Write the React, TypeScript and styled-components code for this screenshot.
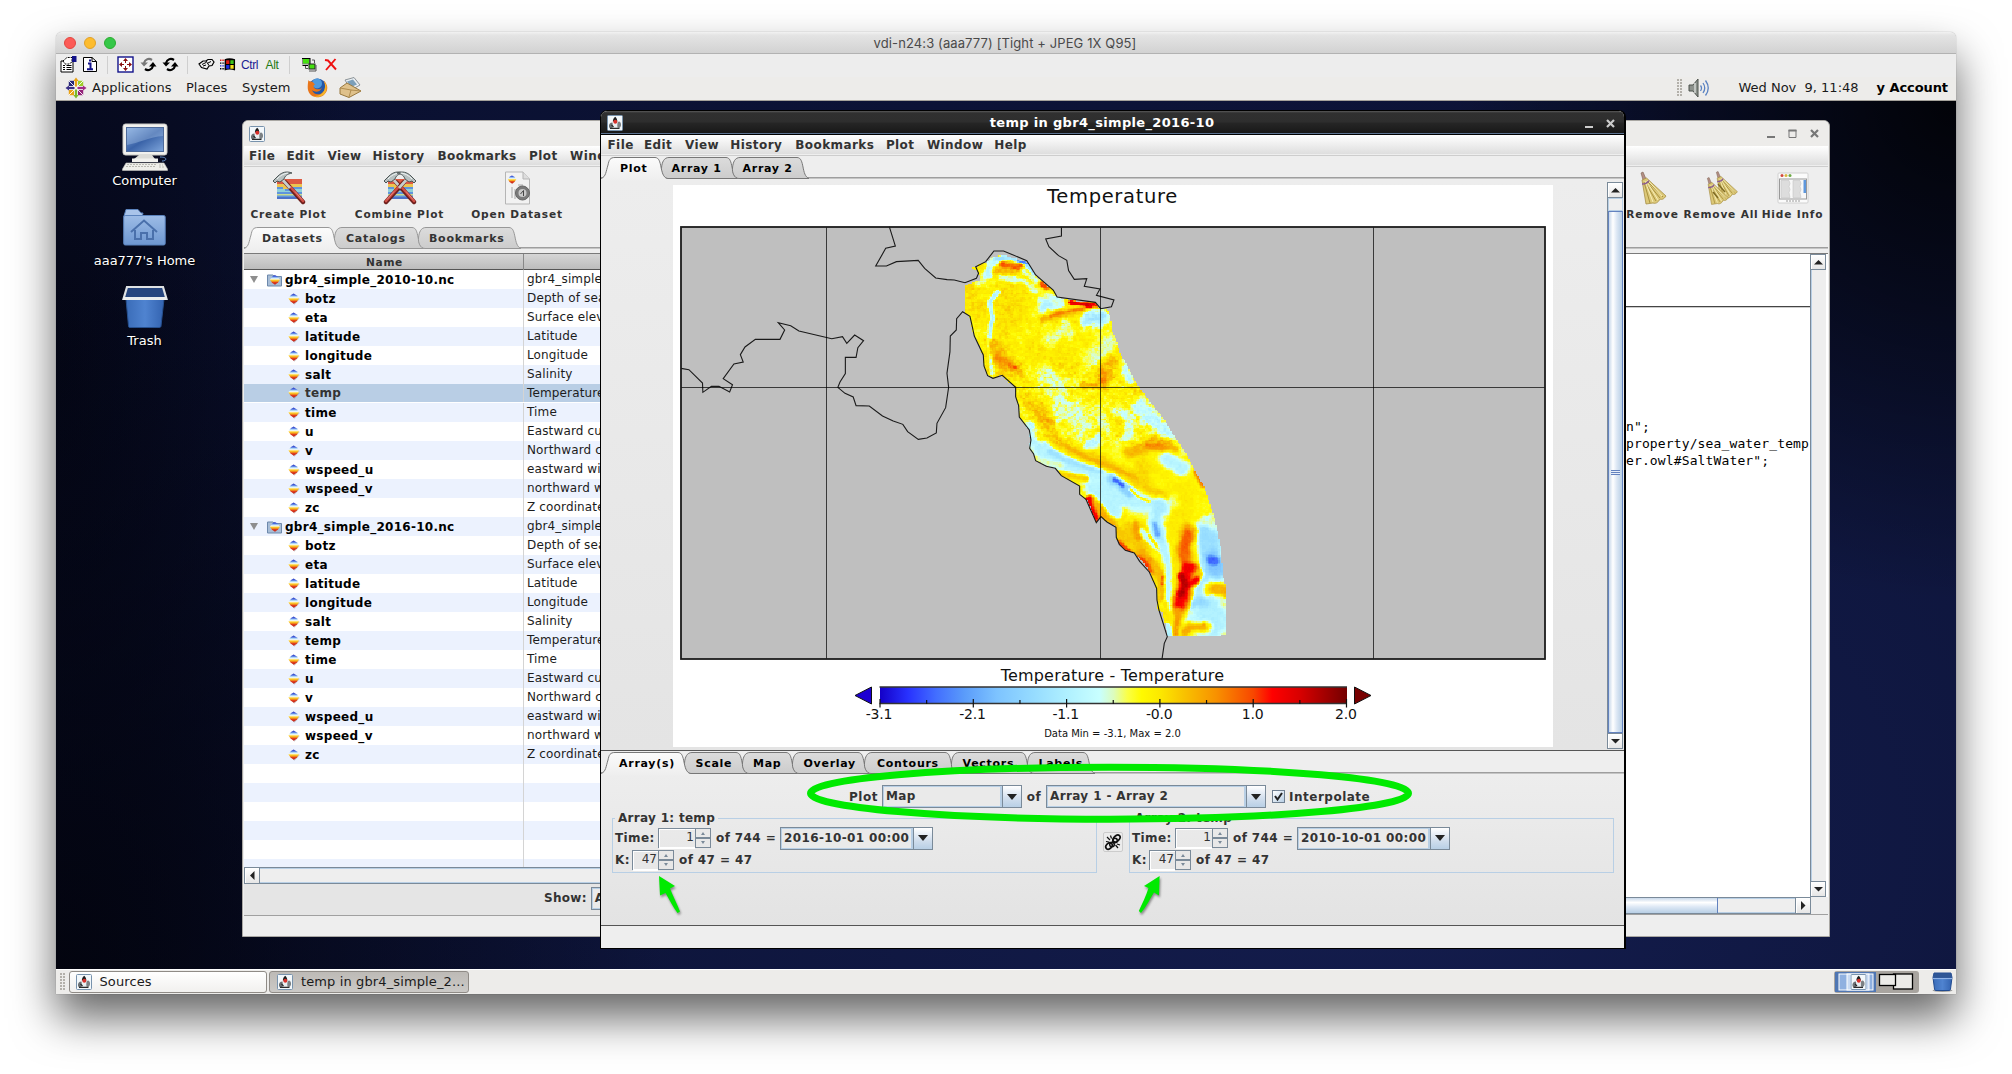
import React from "react";
import styled, { createGlobalStyle, css } from "styled-components";

const Global = createGlobalStyle`
  html, body { margin: 0; padding: 0; background: #fff; }
  body { width: 2012px; height: 1074px; overflow: hidden; font-family: "DejaVu Sans", sans-serif; }
  * { box-sizing: border-box; }
  svg { display: block; }
`;

/* ---------- shell ---------- */
const Page = styled.div`
  height: 1074px;
  padding: 32px 56px 0 56px;
  overflow: hidden;
`;
const MacWindow = styled.div`
  width: 1900px;
  height: 962px;
  display: flex;
  flex-direction: column;
  border-radius: 6px 6px 0 0;
  box-shadow: 0 0 1px rgba(0, 0, 0, 0.5), 0 24px 44px rgba(0, 0, 0, 0.6);
  background: #ededed;
  overflow: clip;
`;
const MacTitle = styled.div`
  height: 22px;
  flex: none;
  display: grid;
  grid-template-columns: 74px 1fr 84px;
  align-items: center;
  padding-left: 8px;
  background: linear-gradient(#f2f2f2, #e4e4e4 15%, #d2d2d2);
  border-bottom: 1px solid #b2b2b2;
  font: 13px/20px Inter, sans-serif;
  letter-spacing: 0.11px;
  color: #4a4a4a;
  text-align: center;
`;
const Lights = styled.div`
  display: flex;
  gap: 8px;
`;
const Light = styled.i<{ $c: string; $b: string }>`
  width: 12px;
  height: 12px;
  border-radius: 50%;
  background: ${(p) => p.$c};
  border: 1px solid ${(p) => p.$b};
`;
const VncBar = styled.div`
  height: 23px;
  flex: none;
  display: flex;
  align-items: center;
  padding: 0 0 2px 3px;
  background: #ededed;
`;
const VncItem = styled.div<{ $w: number }>`
  width: ${(p) => p.$w}px;
  display: flex;
  justify-content: center;
`;
const VncSep = styled.i<{ $m: number }>`
  width: 1px;
  height: 18px;
  background: #cfcfcf;
  margin: 0 ${(p) => p.$m}px;
`;
const Key = styled.span<{ $c: string }>`
  font: 12px/16px "Liberation Sans", sans-serif;
  letter-spacing: -0.4px;
  color: ${(p) => p.$c};
`;
const Panel = styled.div`
  height: 24px;
  flex: none;
  display: flex;
  justify-content: space-between;
  align-items: center;
  padding: 0 8px 2px 9px;
  background: #edecea;
  border-bottom: 1px solid #a5a29b;
  font-size: 13px;
  color: #1a1a1a;
  white-space: pre;
`;
const PanelSide = styled.div`
  display: flex;
  align-items: center;
`;
const PanelItem = styled.span<{ $l: number; $w?: number; $bold?: boolean; $ls?: number }>`
  margin-left: ${(p) => p.$l}px;
  ${(p) => p.$w && css`width: ${p.$w}px;`}
  font-weight: ${(p) => (p.$bold ? 700 : 400)};
  letter-spacing: ${(p) => p.$ls ?? 0}px;
  color: ${(p) => (p.$bold ? "#000" : "#1a1a1a")};
`;
const Grip = styled.i`
  width: 6px;
  height: 18px;
  background: radial-gradient(circle at 1px 1px, #b3b0aa 0.8px, transparent 1px) 0 0 / 3px 3px;
`;
const Desktop = styled.div`
  position: relative;
  flex: 1;
  overflow: hidden;
  background:
    radial-gradient(ellipse 500px 500px at 100% 0%, rgba(0, 0, 0, 0.85), transparent),
    radial-gradient(ellipse 620px 760px at 0% 100%, rgba(2, 3, 12, 0.9), transparent),
    radial-gradient(ellipse 320px 900px at 0% 30%, rgba(2, 3, 12, 0.7), transparent),
    radial-gradient(ellipse 1500px 1100px at 70% 85%, #141d4e, #0d1439 60%, #0a1030);
`;
const DeskIcon = styled.div<{ $y: number }>`
  position: absolute;
  left: 24px;
  top: ${(p) => p.$y}px;
  width: 129px;
  display: flex;
  flex-direction: column;
  align-items: center;
`;
const DeskArt = styled.div`
  height: 50px;
  display: flex;
  align-items: center;
  padding-bottom: 1px;
`;
const DeskLabel = styled.span`
  font-size: 13px;
  line-height: 17px;
  color: #fff;
  text-shadow: 1px 1px 1px #000;
`;

/* ---------- shared window parts ---------- */
const MenuBar = styled.div<{ $pad: number }>`
  height: 21px;
  flex: none;
  display: flex;
  align-items: center;
  padding: 0 0 1px ${(p) => p.$pad}px;
  background: linear-gradient(#fff, #dcdcdc);
  border-bottom: 1px solid #cdcdcd;
  box-shadow: inset 0 -1px #eee;
  font-weight: 700;
  font-size: 12px;
  letter-spacing: 0.42px;
  color: #333;
`;
const MenuItem = styled.span<{ $w: number }>`
  width: ${(p) => p.$w}px;
  flex: none;
`;
const TabBar = styled.div`
  height: 24px;
  flex: none;
  display: flex;
  padding-top: 1px;
  background: linear-gradient(#eee, #eee 21px, #9e9e9e 21px, #9e9e9e 22px, #c4c4c4 22px, #c4c4c4 23px, #eee 23px);
`;
const TabBox = styled.div<{ $w: number; $pad: number; $on?: boolean; $soft?: boolean }>`
  position: relative;
  z-index: ${(p) => (p.$on ? 2 : 1)};
  width: ${(p) => p.$w}px;
  height: 22px;
  flex: none;
  padding-left: ${(p) => p.$pad}px;
  font-weight: 700;
  font-size: 11px;
  line-height: 24px;
  letter-spacing: 0.72px;
  white-space: nowrap;
  color: ${(p) => (p.$soft ? "#333" : "#000")};
  svg {
    position: absolute;
    left: 0;
    top: 0;
    overflow: visible;
    z-index: -1;
  }
`;
function Tab(p: { w: number; pad: number; on?: boolean; soft?: boolean; children: string }) {
  const w = p.w;
  const right = `H${w - 6} C${w - 2},0.5 ${w - 1},5 ${w},10 C${w + 1},15 ${w + 2},20 ${w + 6},21.5`;
  const left = p.on ? "M0,21.5 C5,20 5,14 7,8 C8,3 9,0.5 14,0.5" : "M7,21.5 C2,21.5 0,15 0.5,11 C1,5 3,0.5 8,0.5";
  return (
    <TabBox $w={w} $pad={p.pad} $on={p.on} $soft={p.soft}>
      <svg width={w} height="22">
        <defs>
          <linearGradient id="tabOn" x2="0" y2="1">
            <stop offset="0" stopColor="#fbfbfb" />
            <stop offset="1" stopColor="#eeeeee" />
          </linearGradient>
          <linearGradient id="tabOff" x2="0" y2="1">
            <stop offset="0" stopColor="#dcdcdc" />
            <stop offset="1" stopColor="#cccccc" />
          </linearGradient>
        </defs>
        <path d={`${left} ${right} ${p.on ? "V23.5 H0Z" : "Z"}`} fill={p.on ? "url(#tabOn)" : "url(#tabOff)"} />
        <path d={`${left} ${right} ${p.on ? "" : "Z"}`} fill="none" stroke={p.soft ? "#979797" : "#777"} />
      </svg>
      {p.children}
    </TabBox>
  );
}
const ScrollBtn = styled.div`
  width: 16px;
  height: 16px;
  flex: none;
  display: flex;
  align-items: center;
  justify-content: center;
  background: linear-gradient(#fff, #e6e6e6);
  border: 1px solid #7a8a99;
  box-shadow: inset 1px 1px #fff;
`;
const VBar = styled.div`
  width: 16px;
  align-self: stretch;
  flex: none;
  display: flex;
  flex-direction: column;
  background: #eee;
  border-left: 1px solid #7a8a99;
  box-shadow: inset 1px 0 #b8cfe5;
  ${ScrollBtn} { width: 15px; border-left: 0; }
`;
const VGap = styled.div<{ $h: number }>`
  height: ${(p) => p.$h}px;
  flex: none;
  border: 1px solid #b8cfe5;
`;
const VThumb = styled.div`
  flex: 1;
  display: flex;
  align-items: center;
  justify-content: center;
  border: 1px solid #6382bf;
  background: linear-gradient(90deg, #c8d8ea, #fff 30%, #dce7f4 60%, #b8cfe5);
`;
const ThumbGrip = styled.i`
  width: 9px;
  height: 5px;
  background: repeating-linear-gradient(#6382bf 0 1px, #e6eefa 1px 2px);
`;
const VTrack = styled.div`
  flex: 1;
`;
const HBar = styled.div`
  height: 17px;
  flex: none;
  display: flex;
  background: #eee;
  border: solid #7a8a99;
  border-width: 1px 0;
  box-shadow: inset 0 1px #b8cfe5, inset 0 -1px #b8cfe5;
  ${ScrollBtn} { height: 15px; border-width: 0 1px; }
`;
const HThumb = styled.div`
  flex: 1;
  border-right: 1px solid #6382bf;
  background: linear-gradient(#c8d8ea, #fff 30%, #dce7f4 60%, #b8cfe5);
`;
const HGap = styled.div<{ $w: number }>`
  width: ${(p) => p.$w}px;
`;
const Arrow = ({ d }: { d: "u" | "d" | "l" | "r" }) => {
  const path = { u: "M0,4.5 L4.5,0 L9,4.5Z", d: "M0,0 L4.5,4.5 L9,0Z", l: "M4.5,0 L0,4.5 L4.5,9Z", r: "M0,0 L4.5,4.5 L0,9Z" }[d];
  const v = d === "u" || d === "d";
  return (
    <svg width={v ? 9 : 5} height={v ? 5 : 9}>
      <path d={path} fill="#222" />
    </svg>
  );
};

/* ---------- Sources window ---------- */
const SrcWin = styled.div`
  position: absolute;
  left: 186px;
  top: 19px;
  width: 1588px;
  height: 817px;
  display: flex;
  flex-direction: column;
  background: #eee;
  border: 1px solid #a9a7a3;
  border-radius: 6px 6px 0 0;
  padding: 0 1px;
  overflow: hidden;
  isolation: isolate;
`;
const SrcTitle = styled.div`
  height: 25px;
  flex: none;
  display: flex;
  justify-content: space-between;
  align-items: center;
  padding: 0 9px 0 5px;
  background: #edecea;
`;
const WinButtons = styled.div<{ $end?: boolean }>`
  display: flex;
  gap: 13px;
  ${(p) => p.$end && css`justify-content: flex-end;`}
`;
const Tools = styled.div`
  height: 59px;
  flex: none;
  display: flex;
  justify-content: space-between;
`;
const ToolGroup = styled.div`
  display: flex;
`;
const Tool = styled.div<{ $w: number }>`
  width: ${(p) => p.$w}px;
  display: flex;
  flex-direction: column;
  align-items: center;
  gap: 2px;
  padding-top: 4px;
  font-weight: 700;
  font-size: 10.6px;
  line-height: 15px;
  letter-spacing: 0.82px;
  white-space: nowrap;
  color: #333;
`;
const Split = styled.div`
  flex: 1;
  display: flex;
  margin-top: 3px;
  border-top: 1px solid #7a7a7a;
`;
const LeftPane = styled.div`
  width: 900px;
  flex: none;
  display: flex;
  flex-direction: column;
`;
const HeadRow = styled.div`
  height: 16px;
  flex: none;
  display: grid;
  grid-template-columns: 280px 1fr;
  background: linear-gradient(#d6d6d6, #bcbcbc);
  border-bottom: 1px solid #555;
  font-weight: 700;
  font-size: 10.6px;
  line-height: 16px;
  letter-spacing: 0.7px;
  color: #333;
  text-align: center;
`;
const HeadCell = styled.span`
  border-right: 1px solid #888;
  padding-left: 2px;
`;
const Rows = styled.div`
  height: 597px;
  flex: none;
  overflow: hidden;
`;
const Row = styled.div<{ $odd: boolean; $sel: boolean }>`
  height: 19px;
  display: grid;
  grid-template-columns: 280px 1fr;
  line-height: 18px;
  font-size: 12px;
  color: ${(p) => (p.$sel ? "#333" : "#000")};
  background: ${(p) => (p.$sel ? "#b9cee5" : p.$odd ? "#ecf2fe" : "#fff")};
  ${(p) => p.$sel && css`border-bottom: 1px solid #fff;`}
`;
const NameCell = styled.div<{ $leaf: boolean }>`
  display: flex;
  align-items: center;
  gap: ${(p) => (p.$leaf ? 5 : 3)}px;
  padding-left: ${(p) => (p.$leaf ? 44 : 6)}px;
  border-right: 1px solid #d4d4d4;
  font-weight: 700;
  letter-spacing: 0.28px;
`;
const DescCell = styled.div`
  padding-left: 3px;
  letter-spacing: 0.14px;
  color: #1c1c1c;
  white-space: nowrap;
`;
const Twist = styled.i`
  border: solid transparent;
  border-width: 7px 4.5px 0;
  border-top-color: #8e8e8e;
  margin-right: 6px;
`;
const ShowRow = styled.div`
  height: 32px;
  flex: none;
  display: flex;
  align-items: center;
  gap: 4px;
  padding: 0 0 3px 300px;
  background: #e5e5e5;
  border-bottom: 1px solid #a0a0a0;
  font: 700 12px "DejaVu Sans", sans-serif;
  letter-spacing: 0.3px;
  color: #333;
`;
const RightPane = styled.div`
  flex: 1;
  display: flex;
  flex-direction: column;
`;
const RightTop = styled.div`
  height: 643px;
  flex: none;
  display: flex;
  background: #fff;
  padding-right: 2px;
`;
const Info = styled.div`
  flex: 1;
`;
const InfoHead = styled.div`
  height: 53px;
  border-bottom: 1px solid #444;
  box-shadow: 0 1px #ccc;
`;
const Code = styled.pre`
  margin: 111px 0 0;
  padding-left: 482px;
  font: 13px/17.2px "DejaVu Sans Mono", monospace;
  letter-spacing: 0.13px;
  color: #000;
`;
const RightH = styled.div`
  width: 667px;
`;
const SrcStatus = styled.div`
  flex: 1;
  background: #eee;
  border-top: 1px solid #a0a0a0;
`;

/* ---------- Plot window ---------- */
const PlotWin = styled.div`
  position: absolute;
  left: 544px;
  top: 9px;
  width: 1026px;
  height: 839px;
  display: flex;
  flex-direction: column;
  background: #eee;
  border: solid #000;
  border-width: 1px 2px 1px 1px;
  border-radius: 7px 7px 0 0;
  overflow: hidden;
  isolation: isolate;
`;
const PlotTitle = styled.div`
  height: 24px;
  flex: none;
  display: grid;
  grid-template-columns: 60px 1fr 78px;
  align-items: center;
  padding: 0 9px 0 6px;
  background: linear-gradient(#5a5a5a, #303030 2px, #2e2e2e 11px, #262626 12px, #181818 22px, #5c7391 22px, #5c7391 23px, #000 23px);
  font-weight: 700;
  font-size: 13px;
  line-height: 22px;
  letter-spacing: 0.33px;
  color: #fff;
  text-align: center;
`;
const PlotArea = styled.div`
  height: 571px;
  flex: none;
  display: flex;
  justify-content: space-between;
  padding: 2px 1px 1px 71.5px;
  background: linear-gradient(#ededed, #e4e4e4);
  border-bottom: 1px solid #555;
`;
const Paper = styled.div`
  width: 880px;
  height: 562px;
  margin-top: 3px;
  background: #fff;
  display: flex;
  flex-direction: column;
  align-items: center;
  color: #111;
`;
const PaperTitle = styled.div`
  height: 41px;
  font-size: 19.5px;
  line-height: 23px;
  letter-spacing: 0.66px;
`;
const BarTitle = styled.div`
  margin-top: 6px;
  height: 20px;
  line-height: 20px;
  font-size: 16px;
  letter-spacing: 0.2px;
`;
const BarNote = styled.div`
  font-size: 10px;
  line-height: 14px;
`;
const TickRow = styled.div`
  width: 527px;
  display: flex;
  justify-content: space-between;
  font-size: 14px;
  line-height: 12px;
  height: 19px;
`;
const TickText = styled.span`
  width: 60px;
  text-align: center;
  letter-spacing: -0.2px;
`;
const Controls = styled.div`
  height: 151px;
  flex: none;
  background: linear-gradient(#ededed, #e3e3e3);
  border-bottom: 1px solid #555;
  color: #333;
  font-weight: 700;
  font-size: 12px;
  letter-spacing: 0.4px;
  display: flex;
  flex-direction: column;
`;
const PlotRow = styled.div`
  height: 23px;
  margin-top: 10px;
  display: flex;
  align-items: center;
  padding-left: 248px;
  letter-spacing: 0.5px;
`;
const Fixed = styled.span<{ $w: number; $center?: boolean }>`
  width: ${(p) => p.$w}px;
  flex: none;
  white-space: nowrap;
  ${(p) => p.$center && css`text-align: center;`}
`;
const ComboBox = styled.div<{ $w: number }>`
  width: ${(p) => p.$w}px;
  height: 23px;
  flex: none;
  display: grid;
  grid-template-columns: 1fr 19px;
  border: 1px solid #7a8a99;
  line-height: 18px;
  letter-spacing: 0.38px;
  white-space: nowrap;
  background: #eaeaea;
`;
const ComboText = styled.span`
  border: 1px solid #b8cfe5;
  border-right-width: 2px;
  padding-left: 2px;
  overflow: hidden;
`;
const ComboBtn = styled.span`
  border-left: 1px solid #7a8a99;
  background: linear-gradient(#fff, #d4e0ee 55%, #b8cfe5);
  display: flex;
  align-items: center;
  justify-content: center;
`;
const Combo = ({ w, children }: { w: number; children: string }) => (
  <ComboBox $w={w}>
    <ComboText>{children}</ComboText>
    <ComboBtn>
      <svg width="10" height="6">
        <path d="M0,0 H10 L5,6Z" fill="#222" />
      </svg>
    </ComboBtn>
  </ComboBox>
);
const Check = styled.span`
  width: 13px;
  height: 13px;
  margin: 0 4px 0 6px;
  border: 1px solid #6f7f90;
  background: linear-gradient(135deg, #fff, #b8cfe5);
`;
const Groups = styled.div`
  display: flex;
  align-items: flex-start;
  margin-top: 3px;
  padding-left: 11px;
`;
const Group = styled.fieldset`
  width: 485px;
  height: 62px;
  margin: 0;
  padding: 0 0 0 2px;
  min-width: 0;
  border: 1px solid #b8cfe5;
  legend {
    margin-left: 0;
    padding: 0 3px;
    line-height: 15px;
    letter-spacing: 0.3px;
  }
`;
const Line = styled.div`
  height: 22px;
  margin-top: 1px;
  display: flex;
  align-items: center;
  & + & { margin-top: 0; }
`;
const SpinBox = styled.div<{ $w: number }>`
  width: ${(p) => p.$w}px;
  height: 20px;
  flex: none;
  display: grid;
  grid-template-columns: 1fr 15px;
  border: 1px solid #7a8a99;
  font-weight: 400;
  line-height: 17px;
  letter-spacing: 0;
  text-align: right;
  margin-right: 5px;
`;
const SpinText = styled.span`
  padding-right: 1px;
  box-shadow: inset 1px 1px #fff, 0 2px #fff;
`;
const SpinBtns = styled.span`
  border-left: 1px solid #7a8a99;
  display: grid;
  grid-template-rows: 1fr 1fr;
  justify-items: center;
  align-items: center;
  background: linear-gradient(transparent 8px, #7a8a99 8px 10px, transparent 10px);
`;
const Spin = ({ w, children }: { w: number; children: string }) => (
  <SpinBox $w={w}>
    <SpinText>{children}</SpinText>
    <SpinBtns>
      <svg width="4" height="3"><path d="M0,3 L2,0 L4,3Z" fill="#7a8a99" /></svg>
      <svg width="4" height="3"><path d="M0,0 L2,3 L4,0Z" fill="#7a8a99" /></svg>
    </SpinBtns>
  </SpinBox>
);
const LinkBtn = styled.div`
  width: 20px;
  height: 20px;
  margin: 21px 6px 0 6px;
  border: 1px solid #ccc;
  border-radius: 2px;
  background: #ececec;
`;
const Marks = styled.svg`
  position: absolute;
  left: 0;
  top: 0;
  z-index: 5;
  pointer-events: none;
`;
const Arrows = styled.g`
  fill: #00ea00;
  filter: drop-shadow(1px 2px 1px rgba(0, 0, 0, 0.4));
`;

/* ---------- taskbar ---------- */
const TaskBar = styled.div`
  height: 25px;
  flex: none;
  display: flex;
  align-items: center;
  padding: 0 3px 1px 4px;
  background: #edecea;
  border-top: 1px solid #fff;
  font-size: 13px;
  letter-spacing: 0.12px;
  color: #1a1a1a;
`;
const Task = styled.div<{ $on?: boolean; $w: number }>`
  width: ${(p) => p.$w}px;
  height: 22px;
  margin-left: 2.5px;
  display: flex;
  align-items: center;
  gap: 8px;
  padding: 0 0 0 ${(p) => (p.$on ? 7 : 6)}px;
  border: 1px solid #8f8b86;
  border-radius: 3px;
  white-space: nowrap;
  background: ${(p) => (p.$on ? "linear-gradient(#bdbab6, #cbc9c6)" : "linear-gradient(#fff, #f1f0ee)")};
`;
const Spacer = styled.div`
  flex: 1;
`;
const Pager = styled.div`
  margin-right: 13px;
`;

/* ---------- icons ---------- */
const JavaIcon = ({ s = 16 }: { s?: number }) => (
  <svg width={s} height={s} viewBox="0 0 16 16">
    <rect x=".5" y=".5" width="15" height="15" rx="1" fill="#f3f8fb" stroke="#7893ad" />
    <path d="M2,12 C1.500,9.500 3,7.500 5.500,7.500 L6,13.500 H3Z" fill="#6c7174" />
    <path d="M10.500,7.500 C12,5.500 13.500,6.500 14,9 C14.200,11 13.500,12.500 12,13 L10,12.500Z" fill="#7c8184" />
    <path d="M5.500,13 C5.500,9.500 7,8.500 8.300,8.500 C10,8.500 10.500,11 10.300,13Z" fill="#e9eef0" />
    <path d="M5.800,6.500 C6,4 7,2.500 8.300,1.800 C9.500,3 10.200,4.500 10.400,6.500Z" fill="#1d1d1d" />
    <circle cx="8.300" cy="6.800" r="2" fill="#d9302a" />
    <path d="M3,13.300 H12.500 M4.500,10 L6.500,12" stroke="#2a2a2a" strokeWidth="1.200" />
  </svg>
);
const VarShape = () => (
  <path d="M5.600,0.500 L8.500,2.200 L11,5.200 L9,8.400 L5.800,10.800 L2.600,8.600 L0.400,5.200 L3,2Z" fill="url(#vi)" />
);
const VarIcon = () => (
  <svg width="12" height="12" viewBox="0 0 12 12">
    <defs>
      <linearGradient id="vi" x2="0" y2="1">
        <stop offset="0" stopColor="#2230b8" />
        <stop offset=".16" stopColor="#4a6ae0" />
        <stop offset=".3" stopColor="#b5dcf6" />
        <stop offset=".42" stopColor="#fffdf0" />
        <stop offset=".52" stopColor="#fdd32c" />
        <stop offset=".64" stopColor="#f5a31c" />
        <stop offset=".76" stopColor="#e2401c" />
        <stop offset="1" stopColor="#b81c1c" />
      </linearGradient>
    </defs>
    <path d="M6.4,1.8 L11.8,6 L6.4,11.8 L1.6,6.6Z" fill="#000" opacity=".18" />
    <VarShape />
  </svg>
);
const FolderIcon = () => (
  <svg width="15" height="14" viewBox="0 0 15 14">
    <path d="M.5,2 H6 L7.500,3.500 H14.500 V13 H.5Z" fill="#a8bdd6" stroke="#6d89ac" />
    <g transform="translate(2.500 1.500) scale(.95)"><VarShape /></g>
  </svg>
);
const WinMin = ({ c }: { c: string }) => <svg width="8" height="9"><rect y="7" width="8" height="2" fill={c} /></svg>;
const WinMax = ({ c }: { c: string }) => <svg width="9" height="9"><path d="M1,1 V8.500 H8 V1" fill="none" stroke={c} /><path d="M.5,1.500 H8.500" stroke={c} strokeWidth="2" /></svg>;
const WinClose = ({ c }: { c: string }) => <svg width="9" height="9"><path d="M1,1 L8,8 M8,1 L1,8" stroke={c} strokeWidth="2.200" /></svg>;

const Hammer = ({ flip }: { flip?: boolean }) => (
  <g transform={flip ? "translate(34 0) scale(-1 1)" : undefined}>
    <path d="M13,11 L31,31" stroke="#6e1f1c" strokeWidth="4.400" strokeLinecap="round" />
    <path d="M19,16.500 L31,30" stroke="#cf4e45" strokeWidth="2.600" strokeLinecap="round" />
    <path d="M23,20.500 L30,28.500" stroke="#e8938c" strokeWidth=".8" />
    <path d="M9,7 L18,17" stroke="#c5cdcd" strokeWidth="2.800" />
    <path d="M1,10 L6,5 C10,1 15,0 20,2 C15,3 13,5 12,8 L8,11 L5,10 L3,12Z" fill="#b7c0c0" stroke="#4d5656" />
    <path d="M5,8 C8,4.500 12,2.500 16,2" stroke="#eef3f3" fill="none" />
  </g>
);
const PlotTool = ({ two }: { two?: boolean }) => (
  <svg width="34" height="34" viewBox="0 0 34 34">
    <rect x="5" y="8" width="25" height="20" fill="#5f95dd" />
    <rect x="5" y="8" width="25" height="5" fill="#dd5a42" />
    <path d="M5,13 h25 v3 h-9 v2 h-10 v-2 h-6Z" fill="#ecc550" />
    <path d="M5,18 h8 v2 h9 v-2 h8 v3 h-25Z" fill="#8fd0d8" />
    <path d="M5,23 h25 v1.500 h-25Z" fill="#c8dc90" />
    <path d="M5,26 h25 v2 h-25Z" fill="#4d72c8" />
    <Hammer />
    {two && <Hammer flip />}
  </svg>
);
const DatasetTool = () => (
  <svg width="34" height="34" viewBox="0 0 34 34">
    <path d="M5.500,1 H23 L29.500,8 V33 H5.500Z" fill="#f2f2f2" stroke="#b5b5b5" />
    <path d="M23,1 V8 H29.500" fill="#ddd" stroke="#b5b5b5" />
    <g transform="translate(7.500 4) scale(.8)"><VarShape /></g>
    <path d="M12,16 v11 M15,18 v10 M18,14 h5" stroke="#cdcdcd" strokeWidth="2" />
    <circle cx="22.500" cy="22" r="7" fill="#7a7a7a" stroke="#666" />
    <circle cx="22.500" cy="22" r="4" fill="#c9c9c9" />
    <path d="M20.500,23 L23.500,19.500 V25" stroke="#444" fill="none" />
  </svg>
);
const BroomShape = () => (
  <g>
    <path d="M4,1 L6,0 L9,7 L6,8Z" fill="#b48f86" stroke="#7c5f4d" strokeWidth=".6" />
    <path d="M5,8 L9.500,6 L29,24 C27,27 25,28 23,27 C21,31 18,32 16,31 L9,32Z" fill="#dcc878" stroke="#a78f45" strokeWidth=".8" />
    <path d="M7,10 L13,31 M8,10 L19,29 M9,9 L23,26 M10,9 L26,25" stroke="#a8913f" strokeWidth="1" />
    <path d="M8,9 L16,30 M9.500,9 L21,28 M10.500,8 L25,24" stroke="#f8efb8" strokeWidth="1" />
    <path d="M5,12 C8,12 11,10.500 12,8.500" stroke="#8a5b90" strokeWidth="1.500" fill="none" />
  </g>
);
const Broom = () => <svg width="34" height="34" viewBox="-1 -1 34 34"><BroomShape /></svg>;
const Brooms = () => (
  <svg width="34" height="34" viewBox="-1 -1 34 34">
    <g transform="translate(8 -.5) scale(.84)"><BroomShape /></g>
    <g transform="translate(-1 5.500) scale(.84)"><BroomShape /></g>
    <path d="M8,20 L13,26 M13,12 L20,20" stroke="#7e6a24" strokeWidth="1.400" />
  </svg>
);
const InfoTool = () => (
  <svg width="34" height="34" viewBox="0 0 34 34">
    <rect x="2" y="2" width="30" height="30" rx="1" fill="#fbfbfb" stroke="#d0d0d0" />
    <circle cx="6" cy="4.500" r="1.500" fill="#d3483c" />
    <circle cx="10" cy="4.500" r="1.500" fill="#d9b840" />
    <circle cx="14" cy="4.500" r="1.500" fill="#6cab45" />
    <rect x="3.500" y="8" width="27" height="20" fill="#f8f8f8" stroke="#9a9a9a" />
    <path d="M5,9.500 h8 l1,3 -1,3 1,3 -1,3 1,5 h-9Z M17,9.500 h7 l1,3 -1,3 1,3 -1,3 1,5 h-8Z" fill="#ddd" stroke="#c5c5c5" strokeWidth=".6" />
    <rect x="27.500" y="9" width="2.500" height="13" fill="#5e97dc" />
    <path d="M10,30 h14" stroke="#999" strokeDasharray="2 1" />
  </svg>
);

const ComputerArt = () => (
  <svg width="46" height="48" viewBox="0 0 46 48">
    <defs>
      <linearGradient id="scr" x2="1" y2="1">
        <stop offset="0" stopColor="#88aee0" />
        <stop offset=".5" stopColor="#3a63a8" />
        <stop offset="1" stopColor="#7fa6dc" />
      </linearGradient>
    </defs>
    <rect x="1" y="1" width="44" height="31" rx="2.500" fill="#f1f1ee" stroke="#c9c9c5" />
    <rect x="4.500" y="4.500" width="37" height="24" fill="url(#scr)" stroke="#4d6a9a" />
    <path d="M5,5 H41 V13 C28,14 16,20 5,22Z" fill="#b5cdee" opacity=".35" />
    <path d="M17,32 H30 L33,36 H12Z" fill="#dcdcd8" />
    <path d="M10,35.500 H36 V39 H10Z" fill="#f1f1ee" />
    <path d="M38,34 C46,34 45,38 40,38" fill="none" stroke="#6b93cc" />
    <path d="M4,40 H42 L45.500,46 V47.500 H.5 V46Z" fill="#eeeeea" stroke="#c2c2bd" strokeWidth=".6" />
    <path d="M5,41.500 H34 M4,43.500 H34 M37,42 H41 M37,44 H42" stroke="#b9b9b2" strokeDasharray="2 1" />
  </svg>
);
const HomeArt = () => (
  <svg width="43" height="38" viewBox="0 0 43 38">
    <defs>
      <linearGradient id="fold" x2="0" y2="1">
        <stop offset="0" stopColor="#9dbce6" />
        <stop offset="1" stopColor="#6e97d1" />
      </linearGradient>
    </defs>
    <path d="M1,8 L3,1.500 H15 L18,5 H20 L19,9 H1Z" fill="#a9c4ea" stroke="#5b83bd" />
    <rect x=".7" y="7.500" width="41.500" height="29.500" rx="1.500" fill="url(#fold)" stroke="#5b83bd" />
    <path d="M8,24 L21,12.500 L34,24 M12,22 V31 H18 V25 H24 V31 H30 V22" fill="none" stroke="#4a70ab" strokeWidth="2" />
  </svg>
);
const TrashArt = ({ w = 46, h = 43 }: { w?: number; h?: number }) => (
  <svg width={w} height={h} viewBox="0 0 46 43">
    <defs>
      <linearGradient id="bin" x2="1">
        <stop offset="0" stopColor="#3a6cb8" />
        <stop offset=".5" stopColor="#4f83d0" />
        <stop offset="1" stopColor="#3363b0" />
      </linearGradient>
    </defs>
    <path d="M4,14 H42 L39,41 C39,42 38,42.500 37,42.500 H8 C7,42.500 6.500,42 6.500,41Z" fill="url(#bin)" stroke="#26508f" />
    <path d="M5,2 H41 L44.500,14 H1.500Z" fill="#27467f" stroke="#dfe2e4" strokeWidth="2.200" />
    <path d="M1.500,13.500 H44.500" stroke="#eceeee" strokeWidth="3" />
  </svg>
);
const TrayTrash = () => (
  <svg width="21" height="20" viewBox="0 0 21 20">
    <ellipse cx="10.500" cy="18.500" rx="10" ry="1.500" fill="#999" />
    <path d="M1,5.500 H20 L18.500,17 C18.300,18 18,18.500 17,18.500 H4 C3,18.500 2.700,18 2.500,17Z" fill="url(#bin)" stroke="#214b90" />
    <path d="M2,1 H19 L20,5.500 H1Z" fill="#2f5696" stroke="#274f94" />
    <path d="M1,6.500 H20" stroke="#8fb2e8" strokeWidth="1.200" />
  </svg>
);

const PropsIcon = () => (
  <svg width="17" height="17" viewBox="0 0 17 17">
    <path d="M1,5 H13 V16 H1Z" fill="#fff" stroke="#000" />
    <path d="M3,9.500 H5 M3,11.500 H5 M3,13.500 H5 M6.500,9.500 H11.500 M6.500,11.500 H11.500 M6.500,13.500 H11.500" stroke="#000" />
    <path d="M3,5 L7,1.500 H12 V6 L9,8 H5Z" fill="#fff" stroke="#000" strokeDasharray="2 1" />
    <rect x="12" y="0" width="4.500" height="6" fill="#12128a" />
  </svg>
);
const InfoDoc = () => (
  <svg width="16" height="17" viewBox="0 0 16 17">
    <path d="M1.500,1.500 H10 L14.500,5.500 V15.500 H1.500Z" fill="#fff" stroke="#000" />
    <path d="M10,1.500 V5.500 H14.500" fill="none" stroke="#000" />
    <path d="M6,7.500 H8.500 V13 M5,13.200 H11 M7,4.500 H9" stroke="#12128a" strokeWidth="2" fill="none" />
  </svg>
);
const FullIcon = () => (
  <svg width="17" height="17" viewBox="0 0 17 17">
    <rect x="1" y="1" width="15" height="15" fill="#fff" stroke="#12128a" strokeWidth="1.400" />
    <path d="M8.500,2 L11,5 H6Z M8.500,15 L11,12 H6Z M2,8.500 L5,6 V11Z M15,8.500 L12,6 V11Z" fill="#8b1010" />
    <path d="M8.500,5 V7 M8.500,10 V12 M5,8.500 H7 M10,8.500 H12" stroke="#8b1010" />
  </svg>
);
const Refresh = ({ c }: { c: string }) => (
  <svg width="17" height="15" viewBox="0 0 17 15">
    <path d="M12,3 C9,1 5,2 4,6" fill="none" stroke={c} strokeWidth="2.200" />
    <path d="M0.500,5.500 H8 L4,9.500Z" fill={c} />
    <path d="M5,12 C8,14 12,13 13,9" fill="none" stroke="#000" strokeWidth="2.200" />
    <path d="M16.500,9.500 H9 L13,5Z" fill="#000" />
  </svg>
);
const KeysIcon = () => (
  <svg width="17" height="13" viewBox="0 0 17 13">
    <path d="M1,6 L5,3 L8,3 L10,1.500 H14 L16,4 L14,7.500 L11,8 L9,11 L3.500,9.500Z" fill="#eee" stroke="#000" strokeWidth="1.200" />
    <path d="M4,6.500 L8,4.500 M10,5 L13,3.500 M5,8 L8,7 M8,3 L11,7.500" stroke="#000" />
  </svg>
);
const WinIcon = () => (
  <svg width="17" height="15" viewBox="0 0 17 15">
    <path d="M0,3 H6" stroke="#e01b12" strokeDasharray="1.500 1" strokeWidth="1.500" />
    <path d="M0,6 H6 M0,12 H6" stroke="#000" strokeDasharray="1.500 1" strokeWidth="1.500" />
    <path d="M0,9 H6" stroke="#1c2de0" strokeDasharray="1.500 1" strokeWidth="1.500" />
    <path d="M5,2 C8,.5 12,.5 16,2 V14 C12,12.500 8,12.500 5,14Z" fill="#000" />
    <path d="M6.500,3 h3.500 v4 h-3.500Z" fill="#e01b12" />
    <path d="M11,3 h3.500 v4 h-3.500Z" fill="#3ec51c" />
    <path d="M6.500,8 h3.500 v4 h-3.500Z" fill="#1c2de0" />
    <path d="M11,8 h3.500 v4 h-3.500Z" fill="#f4e11d" />
  </svg>
);
const TransferIcon = () => (
  <svg width="16" height="16" viewBox="0 0 16 16">
    <rect x="1.500" y="1.500" width="7" height="5.500" fill="#45e010" stroke="#888" />
    <path d="M1,1.500 H9 M9,1 V7 M1.500,8.500 H7" stroke="#000" fill="none" />
    <rect x="8" y="7" width="6" height="5" fill="#45e010" stroke="#222" />
    <path d="M11,3 H13.500 V6 M4.500,9 V11.500 H7 M8,14 H15 V8" fill="none" stroke="#555" />
  </svg>
);
const XIcon = () => (
  <svg width="13" height="13" viewBox="0 0 13 13">
    <path d="M1,2 L4,2.500 L12,11.500 M11.500,1 L2,12" fill="none" stroke="#ee1010" strokeWidth="1.900" />
  </svg>
);
const Centos = () => (
  <svg width="22" height="22" viewBox="-11 -11 22 22">
    {([["#e9a213", "#9ccd2a", 0], ["#a22a88", "#932279", 90], ["#7cb82a", "#e9a213", 180], ["#3a2f86", "#262577", 270]] as [string, string, number][]).map(([c, d, a]) => (
      <g key={a} transform={`rotate(${a})`}>
        <path d="M0,-10.500 L2.600,-7 H-2.600Z" fill={c} />
        <rect x="-1.100" y="-7.500" width="2.200" height="6" fill={c} />
        <rect x="2" y="-7.200" width="5.200" height="5.200" fill={d} />
        <path d="M.8,-.8 L7.500,-7.500" stroke="#fff" strokeWidth=".9" />
      </g>
    ))}
  </svg>
);
const Firefox = () => (
  <svg width="21" height="21" viewBox="0 0 21 21">
    <circle cx="10.500" cy="10.500" r="9" fill="#2457a8" />
    <circle cx="10" cy="6.500" r="5" fill="#4e9add" />
    <path d="M1.500,3 C2,4 3,4.500 4.500,4.500 C6,5 7,6 8,8 C6,8 6,10 8,11.500 C11,13 13.500,12.500 15,10.500 C13.500,15 8,16 5,13 C6.500,18 13,19 16.500,14.500 C18.500,12 18.500,7 16.500,3.500 C19.500,6 21,9.500 20,13 C18.500,18 14,20.800 9.500,20.300 C4,19.500 .5,15.500 .7,10 C.8,7 1,5 1.500,3Z" fill="#e8751a" />
    <path d="M16.500,14.500 C18.500,12 18.500,7 17,4 C20.500,8 20.500,14 17,17.500 C14,20 10,20.500 7,19 C11,19 14,18 16.500,14.500Z" fill="#f5b52a" />
  </svg>
);
const Mail = () => (
  <svg width="23" height="21" viewBox="0 0 23 21">
    <path d="M6,3 L15,.5 L21,8 L12,13Z" fill="#e9eef2" stroke="#8a9298" />
    <path d="M8,4.500 L14,2.500 L18,7.500 L12,10Z" fill="#7c9fb9" />
    <path d="M1,11 L8,6 L22,14 L10,20.500 L1,17Z" fill="#dfc18b" stroke="#98783f" />
    <path d="M1,11 L12,13 L22,14 M12,13 L10,20" fill="none" stroke="#b08d50" />
  </svg>
);
const Speaker = () => (
  <svg width="22" height="20" viewBox="0 0 22 20">
    <path d="M1,7 H5 L10,1 V19 L5,13 H1Z" fill="#8c918c" stroke="#4d524d" />
    <path d="M7,5 V15" stroke="#d5d8d5" strokeWidth="1.500" />
    <path d="M12.500,7.500 Q14.500,10 12.500,13 M15,5 Q18.500,10 15,15 M17.500,2.500 Q23,10 17.500,17.500" fill="none" stroke="#5a82c2" strokeWidth="1.300" />
  </svg>
);
const PagerArt = () => (
  <svg width="85" height="22" viewBox="0 0 85 22">
    <rect width="85" height="22" rx="3" fill="#a8a49f" />
    <rect x="1" y="1" width="41" height="20" fill="#4f76b3" />
    <rect x="5" y="3" width="34" height="16" fill="#8fb0e0" stroke="#fff" />
    <rect x="13" y="3" width="22" height="16" fill="#c9daf2" stroke="#fff" />
    <g transform="translate(16.500 3)"><JavaIcon s={16} /></g>
    <rect x="59.500" y="3" width="19" height="15" fill="#ecebe8" stroke="#000" strokeWidth="1.300" />
    <rect x="45.500" y="3.500" width="16" height="11" fill="#ecebe8" stroke="#000" strokeWidth="1.300" />
  </svg>
);

/* ---------- temperature field ---------- */
type Pt = [number, number];
const pts = (s: string): Pt[] => s.trim().split(/\s+/).map((p) => p.split(",").map(Number) as Pt);

const DOMAIN = pts(`195,168 225,156 240,150 236,128 218,118 216,110 232,112 240,102 262,97 275,82 310,76 360,90 384,98 405,135 430,158 460,182 470,202 520,213
585,218 600,236 624,240 632,265 636,300 650,330 658,365 680,405 697,440 720,475 750,515 793,570 830,630 860,675 880,715 912,770 932,830 945,870 955,915 964,960
968,1030 975,1060 978,1105 978,1217 865,1219 803,1221 798,1190 785,1145 772,1140 770,1080 755,1040 740,1010 718,985 702,968 675,962 655,940 648,920 648,892
625,878 602,862 588,878 578,850 565,815 538,792 538,768 520,757 490,742 465,715 438,708 406,690 400,672 388,655 392,630 387,600 357,560 355,525 346,500
346,472 325,455 306,436 280,444 262,437 251,405 249,375 235,340 222,318 213,285 209,258 195,250`);

/* value on the colour scale (0..1), radius, centre line */
const FEATURES: [number, number, string][] = [
  [0.605, 34, "215,190 225,240"],
  [0.61, 50, "330,190 310,270"],
  [0.595, 40, "400,350 480,400"],
  [0.51, 12, "235,150 260,140"],
  [0.42, 6, "292,185 268,212 275,260 268,310 265,350"],
  [0.48, 6, "268,360 275,430"],
  [0.45, 12, "262,130 270,100 285,92"],
  [0.36, 6, "285,85 320,80 375,97 400,128"],
  [0.12, 3, "352,92 380,98"],
  [0.66, 12, "290,120 350,118"],
  [0.78, 8, "305,104 358,109"],
  [0.49, 9, "300,140 370,150 400,182"],
  [0.49, 9, "370,125 405,150"],
  [0.78, 7, "422,160 437,172"],
  [0.4, 16, "432,222 465,212"],
  [0.48, 10, "440,195 480,225"],
  [0.66, 10, "430,268 490,247 560,235"],
  [0.73, 4, "450,258 500,243 545,236"],
  [0.9, 6, "512,216 550,222 590,229"],
  [0.36, 19, "562,268 604,258"],
  [0.51, 22, "455,325 495,295"],
  [0.5, 22, "575,385 625,340"],
  [0.46, 10, "668,395 690,455"],
  [0.67, 18, "280,345 300,385 350,412"],
  [0.72, 8, "290,380 340,410"],
  [0.77, 4, "325,404 345,412"],
  [0.65, 20, "635,395 605,445 600,470"],
  [0.71, 9, "610,425 600,465"],
  [0.67, 8, "550,465 600,468"],
  [0.5, 26, "440,440 480,470"],
  [0.49, 28, "510,540 550,575"],
  [0.5, 16, "480,500 470,560"],
  [0.45, 13, "590,625 560,650"],
  [0.48, 14, "650,540 690,565 678,620"],
  [0.51, 12, "620,600 600,560"],
  [0.44, 22, "725,530 775,580 800,612"],
  [0.52, 10, "820,640 850,665"],
  [0.63, 18, "385,515 440,570 450,610"],
  [0.68, 9, "425,560 450,575"],
  [0.45, 13, "385,590 395,640 430,660"],
  [0.42, 26, "420,665 500,700 600,740 680,790"],
  [0.35, 8, "450,665 540,705 600,722"],
  [0.42, 34, "590,770 660,800 730,820"],
  [0.42, 20, "640,840 600,800"],
  [0.63, 17, "435,590 480,640 540,672 600,692 680,730 740,775 800,800"],
  [0.67, 5, "480,640 560,682 640,712 720,750"],
  [0.3, 12, "632,745 690,790"],
  [0.1, 6, "642,748 664,764"],
  [0.57, 4, "690,778 715,800 745,812"],
  [0.63, 9, "478,730 555,745"],
  [0.5, 8, "430,690 480,705"],
  [0.72, 13, "570,810 590,865"],
  [0.86, 9, "563,808 578,835 586,862"],
  [0.68, 12, "590,820 610,855 640,885"],
  [0.66, 17, "690,665 760,635 812,655"],
  [0.71, 8, "740,645 795,652"],
  [0.62, 16, "720,700 730,750"],
  [0.42, 19, "795,690 845,712"],
  [0.74, 8, "885,725 908,765"],
  [0.59, 34, "850,800 850,870"],
  [0.52, 14, "820,820 815,800"],
  [0.38, 20, "780,825 760,880 775,930"],
  [0.2, 7, "762,882 770,912"],
  [0.64, 28, "665,925 705,900 720,970"],
  [0.7, 9, "705,880 712,920"],
  [0.45, 9, "725,900 760,940 790,965"],
  [0.58, 4, "745,915 775,955"],
  [0.8, 7, "655,937 690,966"],
  [0.7, 20, "720,980 760,1020"],
  [0.81, 8, "715,985 750,1018"],
  [0.66, 12, "765,1010 785,1040 785,1100"],
  [0.79, 4, "788,1040 785,1060"],
  [0.42, 12, "790,950 805,1000 808,1060 805,1130"],
  [0.34, 42, "925,920 935,1000 910,1080"],
  [0.4, 62, "930,1160 900,1120"],
  [0.33, 14, "880,1120 910,1110"],
  [0.59, 17, "835,900 828,1000 830,1150 825,1210"],
  [0.59, 15, "870,900 880,1010"],
  [0.68, 20, "858,905 850,950 858,1000"],
  [0.77, 12, "860,908 850,950 856,1000"],
  [0.59, 12, "895,1030 872,1080 848,1150"],
  [0.74, 22, "870,1020 850,1080 838,1130"],
  [0.86, 15, "862,1010 850,1065 836,1120"],
  [0.85, 10, "886,1046 860,1070"],
  [0.93, 9, "842,1035 855,1065 840,1090"],
  [0.7, 8, "832,1140 826,1210"],
  [0.26, 22, "935,990 950,1010"],
  [0.11, 10, "930,990 942,992"],
  [0.59, 20, "930,1076 978,1082"],
  [0.67, 14, "945,1074 978,1082"],
  [0.6, 15, "850,1205 868,1190 912,1187"],
  [0.68, 9, "852,1207 870,1192 908,1187"],
  [0.6, 8, "795,1120 800,1170"],
  [0.42, 8, "800,1185 806,1212"],
];
const SCALE: [number, number, number, number][] = [
  [0, 20, 0, 200], [0.06, 40, 50, 255], [0.12, 66, 110, 255], [0.18, 90, 155, 250], [0.25, 125, 195, 255],
  [0.33, 150, 220, 255], [0.4, 175, 240, 255], [0.47, 200, 255, 255], [0.5, 220, 252, 190], [0.53, 250, 255, 70],
  [0.56, 255, 250, 0], [0.6, 252, 232, 0], [0.65, 248, 195, 0], [0.72, 248, 145, 0], [0.8, 248, 70, 0],
  [0.84, 255, 0, 0], [0.9, 215, 0, 0], [1, 115, 0, 0],
];
const colour = (t: number) => {
  let i = 1;
  while (i < SCALE.length - 1 && SCALE[i][0] < t) i++;
  const a = SCALE[i - 1], b = SCALE[i];
  const f = Math.max(0, Math.min(1, (t - a[0]) / (b[0] - a[0])));
  return `rgb(${[1, 2, 3].map((k) => Math.round(a[k] + (b[k] - a[k]) * f)).join(",")})`;
};
const hash = (x: number, y: number) => {
  const s = Math.sin(x * 127.1 + y * 311.7) * 43758.5453;
  return s - Math.floor(s);
};
const noise = (x: number, y: number) => {
  const xi = Math.floor(x), yi = Math.floor(y), u = x - xi, v = y - yi;
  const su = u * u * (3 - 2 * u), sv = v * v * (3 - 2 * v);
  const a = hash(xi, yi), b = hash(xi + 1, yi), c = hash(xi, yi + 1), d = hash(xi + 1, yi + 1);
  return (a + (b - a) * su) * (1 - sv) + (c + (d - c) * su) * sv - 0.5;
};
const segDist = (x: number, y: number, a: Pt, b: Pt) => {
  const dx = b[0] - a[0], dy = b[1] - a[1];
  const t = Math.max(0, Math.min(1, ((x - a[0]) * dx + (y - a[1]) * dy) / (dx * dx + dy * dy || 1)));
  return Math.hypot(x - a[0] - t * dx, y - a[1] - t * dy);
};
const inside = (x: number, y: number) => {
  let r = false;
  for (let i = 0, j = DOMAIN.length - 1; i < DOMAIN.length; j = i++) {
    const [xi, yi] = DOMAIN[i], [xj, yj] = DOMAIN[j];
    if (yi > y !== yj > y && x < ((xj - xi) * (y - yi)) / (yj - yi) + xi) r = !r;
  }
  return r;
};
const LEVELS = 90;
const FIELD = (() => {
  const C = 4.5;
  const feats = FEATURES.map(([v, r, s]) => ({ v, r, p: pts(s) }));
  const out: Record<number, string> = {};
  for (let y = 72; y < 1224; y += C) {
    let start = 0, level = -1;
    const flush = (x: number) => {
      if (level >= 0) out[level] = (out[level] || "") + `M${start},${y}h${x - start}v${C}h${start - x}z`;
    };
    for (let x = 190; x < 985; x += C) {
      let lv = -1;
      if (inside(x + C / 2, y + C / 2)) {
        const open = y < 650 ? 1 : 0.5;
        let v = 0.572 + noise(x / 60, y / 60) * 0.06 + noise(x / 22 + 9, y / 18) * 0.04 * open;
        const wob = noise(x / 26 + 50, y / 22) * 1.1 + noise(x / 10, y / 9 + 30) * 0.9 * open;
        for (const f of feats) {
          let d = 1e9;
          for (let k = 1; k < f.p.length; k++) d = Math.min(d, segDist(x, y, f.p[k - 1], f.p[k]));
          const q = Math.max(0, Math.min(1, (1.9 - (d / f.r + wob * 0.75)) / 1.6));
          v += (f.v - v) * q * q * (3 - 2 * q);
        }
        const speck = y > 400 && y < 640 ? 1.5 : 1;
        v += (hash(x, y) - 0.5) * 0.024 * open * speck + noise(x / 9, y / 7) * 0.055 * open * speck;
        lv = Math.max(0, Math.min(LEVELS - 1, Math.round(v * LEVELS)));
      }
      if (lv !== level) {
        flush(x);
        start = x;
        level = lv;
      }
    }
    flush(985);
  }
  return Object.entries(out);
})();

const COAST_A = "838,380 855,438 828,445 800,498 830,498 858,485 919,481 937,505 968,534 1000,539 1020,540 1050,548 1082,535 1088,520 1080,500 1108,485 1131,453 1158,453 1223,482 1248,525 1297,570 1308,591 1415,607 1430,626 1460,620 1467,600 1418,586 1428,567 1384,559 1391,536 1356,538 1340,512 1335,481 1312,467 1285,440 1276,417 1320,408 1320,380";
const COAST_B = "255,805 277,809 315,849 316,877 340,859 361,859 391,876 399,854 373,836 403,792 429,786 421,764 434,741 463,718 532,718 545,690 527,668 562,677 585,693 677,716 707,710 719,730 741,705 766,722 750,743 745,772 715,772 715,821 700,846 694,862 714,880 737,891 745,917 782,918 819,948 849,963 876,973";
const COAST_C = "22,605 54,628 80,624 108,609 110,580 136,533 145,472 140,430 149,365 150,318 168,300 169,266 187,245 209,259 216,290 222,318 249,375 251,408 262,437 278,445 306,436 346,472 346,500 355,527 357,561 387,600 392,630 388,655 400,672 406,692 438,709 465,715 483,737 538,768 538,793 557,808 588,878 602,860 620,876 647,892 648,922 657,943 675,961 702,969 718,994 747,1026 769,1075 770,1110 776,1140 801,1220 792,1240 785,1288";

const MapPlot = () => (
  <svg width="866" height="434" viewBox="680 226 866 434">
    <rect x="681" y="227" width="864" height="432" fill="#bfbfbf" />
    <g transform="translate(900 230) scale(.33333)" shapeRendering="crispEdges">
      {FIELD.map(([l, d]) => (
        <path key={l} d={d} fill={colour(Number(l) / LEVELS)} />
      ))}
    </g>
    <g fill="none" stroke="#1a1a1a" strokeWidth="1.100">
      <path d={"M" + pts(COAST_A).map(([x, y]) => `${x / 2.8 + 590},${y / 3 + 100}`).join("L")} />
      <path d={"M" + [...pts(COAST_B).map(([x, y]) => `${x / 2.8 + 590},${y / 3 + 100}`), ...pts(COAST_C).map(([x, y]) => `${x / 3 + 900.3},${y / 3 + 230}`)].join("L")} />
    </g>
    <path d="M826.500,227 V659 M1100.500,227 V659 M1373.500,227 V659 M681,387.500 H1545" stroke="#000" strokeOpacity=".7" />
    <rect x="681" y="227" width="864" height="432" fill="none" stroke="#1c1c1c" strokeWidth="1.800" />
  </svg>
);
const ColorBar = () => (
  <svg width="520" height="22" viewBox="853 686 520 22">
    <defs>
      <linearGradient id="scale">
        {SCALE.map(([t, r, g, b]) => (
          <stop key={t} offset={t} stopColor={`rgb(${r},${g},${b})`} />
        ))}
      </linearGradient>
    </defs>
    <rect x="880" y="687" width="467" height="17" fill="url(#scale)" />
    <path d="M879.500,687 H1347 M879.500,703.500 H1347" stroke="#333" strokeWidth="1.500" />
    <path d="M871.500,687 V704 L855,695.500Z" fill="#1d00d2" stroke="#111" />
    <path d="M1354.500,687 V704 L1371,695.500Z" fill="#780000" stroke="#111" />
    <path
      d={Array.from({ length: 11 }, (_, i) => `M${880 + i * 46.65},${i % 2 ? 700 : 699}V${i % 2 ? 704 : 707.5}`).join("")}
      stroke="#111"
      strokeWidth="1.200"
    />
  </svg>
);

/* ---------- data ---------- */
const VARS: [string, string][] = [
  ["botz", "Depth of sea-bed"], ["eta", "Surface elevation"], ["latitude", "Latitude"], ["longitude", "Longitude"],
  ["salt", "Salinity"], ["temp", "Temperature"], ["time", "Time"], ["u", "Eastward current"], ["v", "Northward current"],
  ["wspeed_u", "eastward wind"], ["wspeed_v", "northward wind"], ["zc", "Z coordinate"],
];
const TABLE = [
  ["gbr4_simple_2010-10.nc", "gbr4_simple"], ...VARS,
  ["gbr4_simple_2016-10.nc", "gbr4_simple"], ...VARS,
  ...Array.from({ length: 6 }, () => ["", ""]),
];
const MENUS = ["File", "Edit", "View", "History", "Bookmarks", "Plot", "Window", "Help"];
const SRC_W = [37.5, 41, 45, 65, 91.5, 41, 67, 50];
const PLOT_W = [36.4, 41, 45.4, 65, 90.6, 41, 67.4, 50];

const Sources = () => (
  <SrcWin>
    <SrcTitle>
      <JavaIcon />
      <WinButtons>
        <WinMin c="#777" />
        <WinMax c="#777" />
        <WinClose c="#777" />
      </WinButtons>
    </SrcTitle>
    <MenuBar $pad={5}>
      {MENUS.map((m, i) => <MenuItem key={m} $w={SRC_W[i]}>{m}</MenuItem>)}
    </MenuBar>
    <Tools>
      <ToolGroup>
        <Tool $w={89}><PlotTool />Create Plot</Tool>
        <Tool $w={133}><PlotTool two />Combine Plot</Tool>
        <Tool $w={102}><DatasetTool />Open Dataset</Tool>
      </ToolGroup>
      <ToolGroup>
        <Tool $w={65}><Broom />Remove</Tool>
        <Tool $w={72}><Brooms />Remove All</Tool>
        <Tool $w={71}><InfoTool />Hide Info</Tool>
      </ToolGroup>
    </Tools>
    <TabBar>
      <Tab w={90} pad={18} on soft>Datasets</Tab>
      <Tab w={84} pad={12} soft>Catalogs</Tab>
      <Tab w={97} pad={11} soft>Bookmarks</Tab>
    </TabBar>
    <Split>
      <LeftPane>
        <HeadRow>
          <HeadCell>Name</HeadCell>
          <HeadCell>Long Name</HeadCell>
        </HeadRow>
        <Rows>
          {TABLE.map(([n, d], i) => {
            const top = n.startsWith("gbr4");
            return (
              <Row key={i} $odd={i % 2 === 1} $sel={i === 6}>
                <NameCell $leaf={!top}>
                  {top && <Twist />}
                  {top ? <FolderIcon /> : n && <VarIcon />}
                  {n}
                </NameCell>
                <DescCell>{d}</DescCell>
              </Row>
            );
          })}
        </Rows>
        <HBar><ScrollBtn><Arrow d="l" /></ScrollBtn></HBar>
        <ShowRow>Show:<Combo w={120}>All variables</Combo></ShowRow>
      </LeftPane>
      <RightPane>
        <RightTop>
          <Info>
            <InfoHead />
            <Code>{`n";\nproperty/sea_water_temp\ner.owl#SaltWater";`}</Code>
          </Info>
          <VBar>
            <ScrollBtn><Arrow d="u" /></ScrollBtn>
            <VTrack />
            <ScrollBtn><Arrow d="d" /></ScrollBtn>
          </VBar>
        </RightTop>
        <RightH>
          <HBar>
            <HThumb />
            <HGap $w={77} />
            <ScrollBtn><Arrow d="r" /></ScrollBtn>
          </HBar>
        </RightH>
        <SrcStatus />
      </RightPane>
    </Split>
  </SrcWin>
);

const ArrayGroup = ({ n, date }: { n: number; date: string }) => (
  <Group>
    <legend>Array {n}: temp</legend>
    <Line>
      <Fixed $w={43}>Time:</Fixed>
      <Spin w={53}>1</Spin>
      <Fixed $w={64}>of 744 =</Fixed>
      <Combo w={153}>{date}</Combo>
    </Line>
    <Line>
      <Fixed $w={17}>K:</Fixed>
      <Spin w={42}>47</Spin>
      of 47 = 47
    </Line>
  </Group>
);

const Plot = () => (
  <PlotWin>
    <PlotTitle>
      <JavaIcon />
      <span>temp in gbr4_simple_2016-10</span>
      <WinButtons $end>
        <WinMin c="#ccc" />
        <WinClose c="#ccc" />
      </WinButtons>
    </PlotTitle>
    <MenuBar $pad={6.5}>
      {MENUS.map((m, i) => <MenuItem key={m} $w={PLOT_W[i]}>{m}</MenuItem>)}
    </MenuBar>
    <TabBar>
      <Tab w={60} pad={19} on>Plot</Tab>
      <Tab w={71} pad={10.5}>Array 1</Tab>
      <Tab w={71} pad={10.5}>Array 2</Tab>
    </TabBar>
    <PlotArea>
      <Paper>
        <PaperTitle>Temperature</PaperTitle>
        <MapPlot />
        <BarTitle>Temperature - Temperature</BarTitle>
        <ColorBar />
        <TickRow>
          {["-3.1", "-2.1", "-1.1", "-0.0", "1.0", "2.0"].map((t) => <TickText key={t}>{t}</TickText>)}
        </TickRow>
        <BarNote>Data Min = -3.1, Max = 2.0</BarNote>
      </Paper>
      <VBar>
        <ScrollBtn><Arrow d="u" /></ScrollBtn>
        <VGap $h={13} />
        <VThumb><ThumbGrip /></VThumb>
        <ScrollBtn><Arrow d="d" /></ScrollBtn>
      </VBar>
    </PlotArea>
    <TabBar>
      <Tab w={83} pad={18} on>Array(s)</Tab>
      <Tab w={58} pad={11.5}>Scale</Tab>
      <Tab w={50} pad={11}>Map</Tab>
      <Tab w={72} pad={11.5}>Overlay</Tab>
      <Tab w={87} pad={13}>Contours</Tab>
      <Tab w={76} pad={11.5}>Vectors</Tab>
      <Tab w={62} pad={11.5}>Labels</Tab>
    </TabBar>
    <Controls>
      <PlotRow>
        <Fixed $w={33}>Plot</Fixed>
        <Combo w={140}>Map</Combo>
        <Fixed $w={24} $center>of</Fixed>
        <Combo w={220}>Array 1 - Array 2</Combo>
        <Check>
          <svg width="11" height="11"><path d="M2,5 L4.500,8.500 L9,2" fill="none" stroke="#222" strokeWidth="2" /></svg>
        </Check>
        Interpolate
      </PlotRow>
      <Groups>
        <ArrayGroup n={1} date="2016-10-01 00:00" />
        <LinkBtn>
          <svg width="18" height="18" viewBox="0 0 18 18" fill="none" stroke="#111">
            <ellipse cx="12.500" cy="5.500" rx="4.200" ry="2.700" transform="rotate(-45 12.500 5.500)" strokeWidth="1.700" />
            <circle cx="11" cy="7.500" r="2.300" strokeWidth="1.500" />
            <ellipse cx="5" cy="13" rx="3.600" ry="2.700" transform="rotate(-45 5 13)" strokeWidth="1.700" />
            <circle cx="8" cy="11.500" r="2.300" strokeWidth="1.500" />
            <path d="M3,4 L6,7 M6.500,2.500 L7.500,5.500 M2,8.500 L5,9 M11.500,12 L14,15 M13,11 L16,12" strokeWidth="1.200" />
          </svg>
        </LinkBtn>
        <ArrayGroup n={2} date="2010-10-01 00:00" />
      </Groups>
    </Controls>
  </PlotWin>
);

const Annotations = () => (
  <Marks width="1900" height="868" viewBox="56 101 1900 868">
    <ellipse cx="1109.500" cy="793.200" rx="299" ry="26" fill="none" stroke="#00ea00" strokeWidth="7" />
    <Arrows>
      <path d="M659,876 L675,886 L670,888.500 C673,896 677,904 680,911.500 L677.500,913 C673,907 669,899 665.500,893 L660,895.500Z" />
      <path d="M1159.600,876 L1144,886 L1148.500,888 C1146,896 1142,904 1138.800,911 L1141,913 C1146,907 1150,899 1154,892.500 L1159,895.500Z" />
    </Arrows>
  </Marks>
);

export default function App() {
  return (
    <Page>
      <Global />
      <MacWindow>
        <MacTitle>
          <Lights>
            <Light $c="#fc5b57" $b="#e2463f" />
            <Light $c="#fdbc2e" $b="#e0a028" />
            <Light $c="#35c748" $b="#2bac2f" />
          </Lights>
          <span>vdi-n24:3 (aaa777) [Tight + JPEG 1X Q95]</span>
        </MacTitle>
        <VncBar>
          <VncItem $w={18}><PropsIcon /></VncItem>
          <VncItem $w={26}><InfoDoc /></VncItem>
          <VncSep $m={4} />
          <VncItem $w={27}><FullIcon /></VncItem>
          <VncItem $w={18}><Refresh c="#777" /></VncItem>
          <VncItem $w={26}><Refresh c="#000" /></VncItem>
          <VncSep $m={4} />
          <VncItem $w={28}><KeysIcon /></VncItem>
          <VncItem $w={16}><WinIcon /></VncItem>
          <VncItem $w={27}><Key $c="#1b1b93">Ctrl</Key></VncItem>
          <VncItem $w={18}><Key $c="#1f7a14">Alt</Key></VncItem>
          <VncSep $m={8} />
          <VncItem $w={22}><TransferIcon /></VncItem>
          <VncItem $w={20}><XIcon /></VncItem>
        </VncBar>
        <Panel>
          <PanelSide>
            <Centos />
            <PanelItem $l={5} $w={94}>Applications</PanelItem>
            <PanelItem $l={0} $w={56}>Places</PanelItem>
            <PanelItem $l={0} $w={65}>System</PanelItem>
            <Firefox />
            <PanelItem $l={11}><Mail /></PanelItem>
          </PanelSide>
          <PanelSide>
            <Grip />
            <PanelItem $l={5}><Speaker /></PanelItem>
            <PanelItem $l={28}>Wed Nov  9, 11:48</PanelItem>
            <PanelItem $l={18} $bold $ls={-0.08}>y Account</PanelItem>
          </PanelSide>
        </Panel>
        <Desktop>
          <DeskIcon $y={21}><DeskArt><ComputerArt /></DeskArt><DeskLabel>Computer</DeskLabel></DeskIcon>
          <DeskIcon $y={101}><DeskArt><HomeArt /></DeskArt><DeskLabel>aaa777's Home</DeskLabel></DeskIcon>
          <DeskIcon $y={181}><DeskArt><TrashArt /></DeskArt><DeskLabel>Trash</DeskLabel></DeskIcon>
          <Sources />
          <Plot />
          <Annotations />
        </Desktop>
        <TaskBar>
          <Grip />
          <Task $w={198}><JavaIcon />Sources</Task>
          <Task $w={200} $on><JavaIcon />temp in gbr4_simple_2...</Task>
          <Spacer />
          <Pager><PagerArt /></Pager>
          <TrayTrash />
        </TaskBar>
      </MacWindow>
    </Page>
  );
}
